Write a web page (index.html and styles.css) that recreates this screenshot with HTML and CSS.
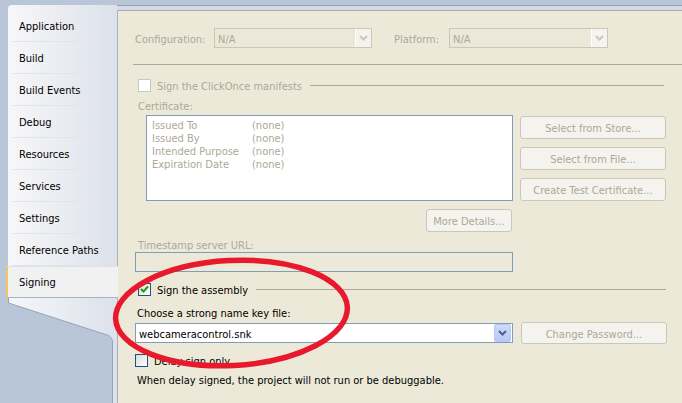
FILE: index.html
```html
<!DOCTYPE html>
<html>
<head>
<meta charset="utf-8">
<link rel="stylesheet" href="styles.css">
</head>
<body>
<div class="app">
  <nav class="sidebar">
    <div class="tabs">
      <div class="tab">Application</div>
      <div class="tab">Build</div>
      <div class="tab">Build Events</div>
      <div class="tab">Debug</div>
      <div class="tab">Resources</div>
      <div class="tab">Services</div>
      <div class="tab">Settings</div>
      <div class="tab">Reference Paths</div>
      <div class="tab active">Signing</div>
    </div>
    <svg class="tail" width="117" height="105" viewBox="0 0 117 105">
      <defs>
        <linearGradient id="tg" x1="0" x2="1" y1="0" y2="0">
          <stop offset="0" stop-color="#f6f7f9"/>
          <stop offset="1" stop-color="#dce1ea"/>
        </linearGradient>
      </defs>
      <path d="M8,0 L8,5 L107,37 Q112,39 112,44 L112,105 L117,105 L117,0 Z" fill="url(#tg)"/>
      <path d="M8.5,0 L8.5,5 L107,37 Q112.5,39 112.5,44 L112.5,105" fill="none" stroke="#97a3b5" stroke-width="1"/>
    </svg>
  </nav>
  <main class="main">
    <div class="page">
      <div class="row config-row">
        <span class="lbl dis cfg-lbl">Configuration:</span>
        <div class="select disabled w158"><span class="sel-text">N/A</span><span class="drop"><svg width="9" height="6" viewBox="0 0 9 6"><polyline points="1,1 4.5,4.5 8,1" fill="none" stroke="#c9c7ba" stroke-width="2"/></svg></span></div>
        <span class="lbl dis plat-lbl">Platform:</span>
        <div class="select disabled w159"><span class="sel-text">N/A</span><span class="drop"><svg width="9" height="6" viewBox="0 0 9 6"><polyline points="1,1 4.5,4.5 8,1" fill="none" stroke="#c9c7ba" stroke-width="2"/></svg></span></div>
      </div>
      <div class="sep"></div>
      <div class="check-row r1">
        <span class="cb cb-dis"></span>
        <span class="ctext dis">Sign the ClickOnce manifests</span>
        <span class="gline gl1"></span>
      </div>
      <div class="lbl dis cert-lbl">Certificate:</div>
      <div class="cert-area">
        <div class="cert-box">
          <div class="cert-row"><span class="k">Issued To</span><span>(none)</span></div>
          <div class="cert-row"><span class="k">Issued By</span><span>(none)</span></div>
          <div class="cert-row"><span class="k">Intended Purpose</span><span>(none)</span></div>
          <div class="cert-row"><span class="k">Expiration Date</span><span>(none)</span></div>
        </div>
        <div class="btn-col">
          <div class="btn">Select from Store...</div>
          <div class="btn">Select from File...</div>
          <div class="btn">Create Test Certificate...</div>
        </div>
      </div>
      <div class="more-row"><div class="btn more">More Details...</div></div>
      <div class="lbl dis ts-lbl">Timestamp server URL:</div>
      <div class="textbox ts"></div>
      <div class="check-row r2">
        <span class="cb cb-on"><svg width="11" height="11" viewBox="0 0 11 11"><polyline points="2,5 4.5,7.5 9,2.5" fill="none" stroke="#21a121" stroke-width="2.2"/></svg></span>
        <span class="ctext">Sign the assembly</span>
        <span class="gline gl2"></span>
      </div>
      <div class="lbl choose">Choose a strong name key file:</div>
      <div class="key-row">
        <div class="select key"><span class="sel-text">webcameracontrol.snk</span><span class="drop on"><svg width="9" height="6" viewBox="0 0 9 6"><polyline points="1,1 4.5,4.5 8,1" fill="none" stroke="#4d6185" stroke-width="2"/></svg></span></div>
        <div class="btn pw">Change Password...</div>
      </div>
      <div class="check-row r3">
        <span class="cb cb-en"></span>
        <span class="ctext">Delay sign only</span>
      </div>
      <div class="lbl note">When delay signed, the project will not run or be debuggable.</div>
    </div>
  </main>
  <svg class="ring" width="682" height="403" viewBox="0 0 682 403">
    <ellipse cx="231.5" cy="313" rx="116" ry="52.5" transform="rotate(-3 231.5 313)" fill="none" stroke="#e8192c" stroke-width="5.5"/>
  </svg>
</div>
</body>
</html>
```

FILE: styles.css
```css
* { box-sizing: border-box; }
html, body { margin: 0; padding: 0; }
body {
  width: 682px;
  height: 403px;
  overflow: hidden;
  font-family: "DejaVu Sans Condensed", "Liberation Sans", Tahoma, sans-serif;
  font-size: 11px;
  line-height: 13px;
  color: #000;
  background: #b9c6d7;
}
.app {
  position: relative;
  display: flex;
  width: 682px;
  height: 403px;
}
.sidebar {
  width: 117px;
  flex: none;
  padding-top: 5px;
  display: flex;
  flex-direction: column;
}
.tabs {
  margin-left: 8px;
  padding-top: 5px;
  background: linear-gradient(to right, #f7f7f8, #dce1ea);
  border-top-left-radius: 4px;
  display: flex;
  flex-direction: column;
}
.tab {
  position: relative;
  height: 32px;
  padding-left: 11px;
  padding-top: 1px;
  display: flex;
  align-items: center;
}
.tab::after {
  content: "";
  position: absolute;
  left: 4px;
  right: 16px;
  bottom: 0;
  height: 1px;
  background: #e1e4eb;
}
.tab.active {
  margin-left: -2px;
  margin-right: -1px;
  padding-left: 11px;
  background: #f1f1f2;
  border-left: 2px solid #f0c463;
  border-top: 1px solid #dde2ea;
  border-bottom: 1px solid #a7b2c2;
  z-index: 1;
}
.tab.active::after { display: none; }
.tail { display: block; flex: none; }

.main {
  flex: 1;
  margin-top: 5px;
  border-top: 1px solid #98a4b6;
  background: #d3dae5;
  padding-top: 4px;
  display: flex;
  flex-direction: column;
}
.page {
  flex: 1;
  background: #ece9d8;
  border-top: 1px solid #a3acba;
  border-left: 1px solid #a7b1c0;
  padding: 17px 16px 0 15px;
  display: flex;
  flex-direction: column;
}
.dis { color: #aca899; }
.lbl { display: block; }

.row { display: flex; align-items: center; }
.config-row { height: 20px; margin-left: 2px; }
.cfg-lbl { width: 79px; padding-top: 2px; }
.plat-lbl { width: 55px; margin-left: 22px; padding-top: 2px; }

.select {
  height: 20px;
  border: 1px solid #7f9db9;
  background: #fff;
  display: flex;
  align-items: center;
  padding-left: 3px;
}
.select .sel-text { flex: 1; white-space: nowrap; padding-top: 2px; }
.select.disabled {
  border-color: #c9c7ba;
  background: #ebe8d8;
  color: #aca899;
}
.w158 { width: 158px; }
.w159 { width: 159px; }
.drop {
  width: 16px;
  height: 18px;
  display: flex;
  align-items: center;
  justify-content: center;
}
.select.disabled .drop {
  background: #f4f3ee;
  border-left: 1px solid #fff;
}
.drop.on {
  background: linear-gradient(#cbdafc, #b7caf6);
  border: 1px solid #b6c9f5;
  border-radius: 2px;
  height: 18px;
  width: 17px;
}

.sep {
  height: 1px;
  background: #aca899;
  margin-top: 16px;
  margin-right: -16px;
}

.check-row { display: flex; align-items: center; height: 13px; }
.ctext { padding-top: 2px; }
.cb {
  width: 13px;
  height: 13px;
  flex: none;
  margin-right: 6px;
  display: flex;
  align-items: center;
  justify-content: center;
}
.cb-dis { border: 1px solid #cac8bb; background: #fff; }
.cb-on { border: 1px solid #1c5180; background: linear-gradient(135deg, #dcdcd6, #fff); }
.cb-en { border: 1px solid #1c5180; background: linear-gradient(135deg, #dcdcd6, #fff); }
.gline { flex: 1; height: 1px; background: #aca899; }
.r1 { margin-top: 14px; margin-left: 5px; }
.gl1 { margin-left: 8px; margin-right: 3px; }

.cert-lbl { margin-top: 8px; margin-left: 5px; }
.cert-area { display: flex; margin-top: 2px; margin-left: 13px; }
.cert-box {
  width: 367px;
  height: 86px;
  border: 1px solid #7f9db9;
  background: #fff;
  padding: 3px 0 0 5px;
  color: #aca899;
}
.cert-row { display: flex; height: 13px; }
.cert-row .k { width: 100px; }
.btn-col {
  margin-left: 7px;
  margin-top: 1px;
  display: flex;
  flex-direction: column;
  gap: 8px;
}
.btn {
  width: 146px;
  height: 23px;
  border: 1px solid #c9c7ba;
  border-radius: 3px;
  background: #f4f3ee;
  color: #aca899;
  display: flex;
  align-items: center;
  justify-content: center;
  padding-top: 2px;
  white-space: nowrap;
}
.more-row {
  margin-top: 8px;
  margin-left: 13px;
  width: 367px;
  display: flex;
  justify-content: flex-end;
}
.btn.more { width: 86px; margin-right: 1px; }

.ts-lbl { margin-top: 7px; margin-left: 5px; }
.textbox {
  height: 20px;
  border: 1px solid #7f9db9;
}
.ts { margin-top: 0; margin-left: 2px; width: 378px; }

.r2 { margin-top: 11px; margin-left: 5px; }
.gl2 { margin-left: 8px; margin-right: 1px; }

.choose { margin-top: 11px; margin-left: 4px; }
.key-row { display: flex; align-items: center; margin-top: 2px; margin-left: 2px; height: 22px; }
.select.key { width: 378px; padding-right: 1px; }
.btn.pw { margin-left: 8px; height: 22px; }

.r3 { margin-top: 10px; margin-left: 2px; }
.note { margin-top: 7px; margin-left: 4px; }

.ring {
  position: absolute;
  left: 0;
  top: 0;
  pointer-events: none;
}
```
